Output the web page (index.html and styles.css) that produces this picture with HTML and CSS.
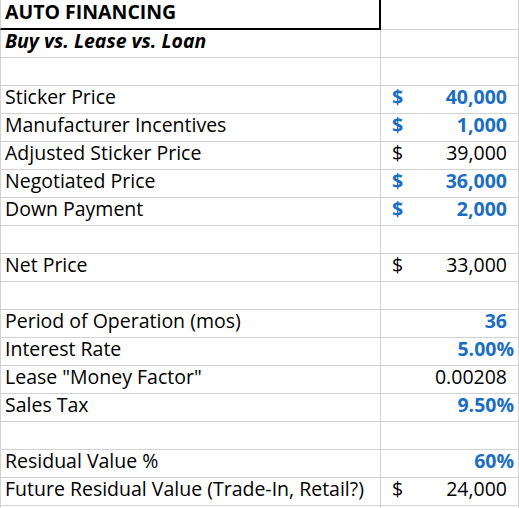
FILE: index.html
```html
<!DOCTYPE html>
<html>
<head>
<meta charset="utf-8">
<link rel="stylesheet" href="styles.css">
</head>
<body>
<div class="sheet">
  <div class="row head">
    <div class="a title">AUTO FINANCING</div>
    <div class="b"></div>
  </div>
  <div class="row">
    <div class="a sub">Buy vs. Lease vs. Loan</div>
    <div class="b"></div>
  </div>
  <div class="row"><div class="a"></div><div class="b"></div></div>
  <div class="row">
    <div class="a">Sticker Price</div>
    <div class="b acct input"><span>$</span><span>40,000</span></div>
  </div>
  <div class="row">
    <div class="a">Manufacturer Incentives</div>
    <div class="b acct input"><span>$</span><span>1,000</span></div>
  </div>
  <div class="row">
    <div class="a">Adjusted Sticker Price</div>
    <div class="b acct"><span>$</span><span>39,000</span></div>
  </div>
  <div class="row">
    <div class="a">Negotiated Price</div>
    <div class="b acct input"><span>$</span><span>36,000</span></div>
  </div>
  <div class="row">
    <div class="a">Down Payment</div>
    <div class="b acct input"><span>$</span><span>2,000</span></div>
  </div>
  <div class="row"><div class="a"></div><div class="b"></div></div>
  <div class="row">
    <div class="a">Net Price</div>
    <div class="b acct"><span>$</span><span>33,000</span></div>
  </div>
  <div class="row"><div class="a"></div><div class="b"></div></div>
  <div class="row">
    <div class="a">Period of Operation (mos)</div>
    <div class="b num input">36</div>
  </div>
  <div class="row">
    <div class="a">Interest Rate</div>
    <div class="b pct input">5.00%</div>
  </div>
  <div class="row">
    <div class="a">Lease "Money Factor"</div>
    <div class="b num">0.00208</div>
  </div>
  <div class="row">
    <div class="a">Sales Tax</div>
    <div class="b pct input">9.50%</div>
  </div>
  <div class="row"><div class="a"></div><div class="b"></div></div>
  <div class="row">
    <div class="a">Residual Value %</div>
    <div class="b pct input">60%</div>
  </div>
  <div class="row">
    <div class="a">Future Residual Value (Trade-In, Retail?)</div>
    <div class="b acct"><span>$</span><span>24,000</span></div>
  </div>
  <div class="row"><div class="a"></div><div class="b"></div></div>
</div>
</body>
</html>
```

FILE: styles.css
```css
html, body {
  margin: 0;
  padding: 0;
  background: #ffffff;
}
body {
  font-family: "Open Sans", Lato, sans-serif;
  font-size: 19.5px;
  color: #000000;
}
.sheet {
  width: 519px;
  height: 508px;
  overflow: hidden;
  display: flex;
  flex-direction: column;
}
.row {
  display: flex;
  flex: none;
  height: 28px;
}
.row.head {
  height: 30px;
}
.a, .b {
  box-sizing: border-box;
  height: 100%;
  line-height: 22px;
  white-space: nowrap;
  border-bottom: 1px solid #d2d2d2;
}
.a {
  width: 381px;
  padding-left: 4px;
  border-left: 1px solid #d2d2d2;
  border-right: 1px solid #d2d2d2;
}
.b {
  width: 138px;
  border-right: 1px solid #d2d2d2;
  padding: 0 11px;
}
.head .a {
  border-right: 2px solid #000000;
  border-bottom: 2px solid #000000;
  padding-top: 1px;
}
.head .b {
  border-bottom: 1px solid #d2d2d2;
}
.title {
  font-weight: 700;
}
.sub {
  font-weight: 700;
  font-style: italic;
}
.acct {
  display: flex;
  justify-content: space-between;
}
.num {
  text-align: right;
}
.pct {
  text-align: right;
  padding-right: 4px;
}
.input {
  color: #1b6ec2;
  font-weight: 700;
}
```
